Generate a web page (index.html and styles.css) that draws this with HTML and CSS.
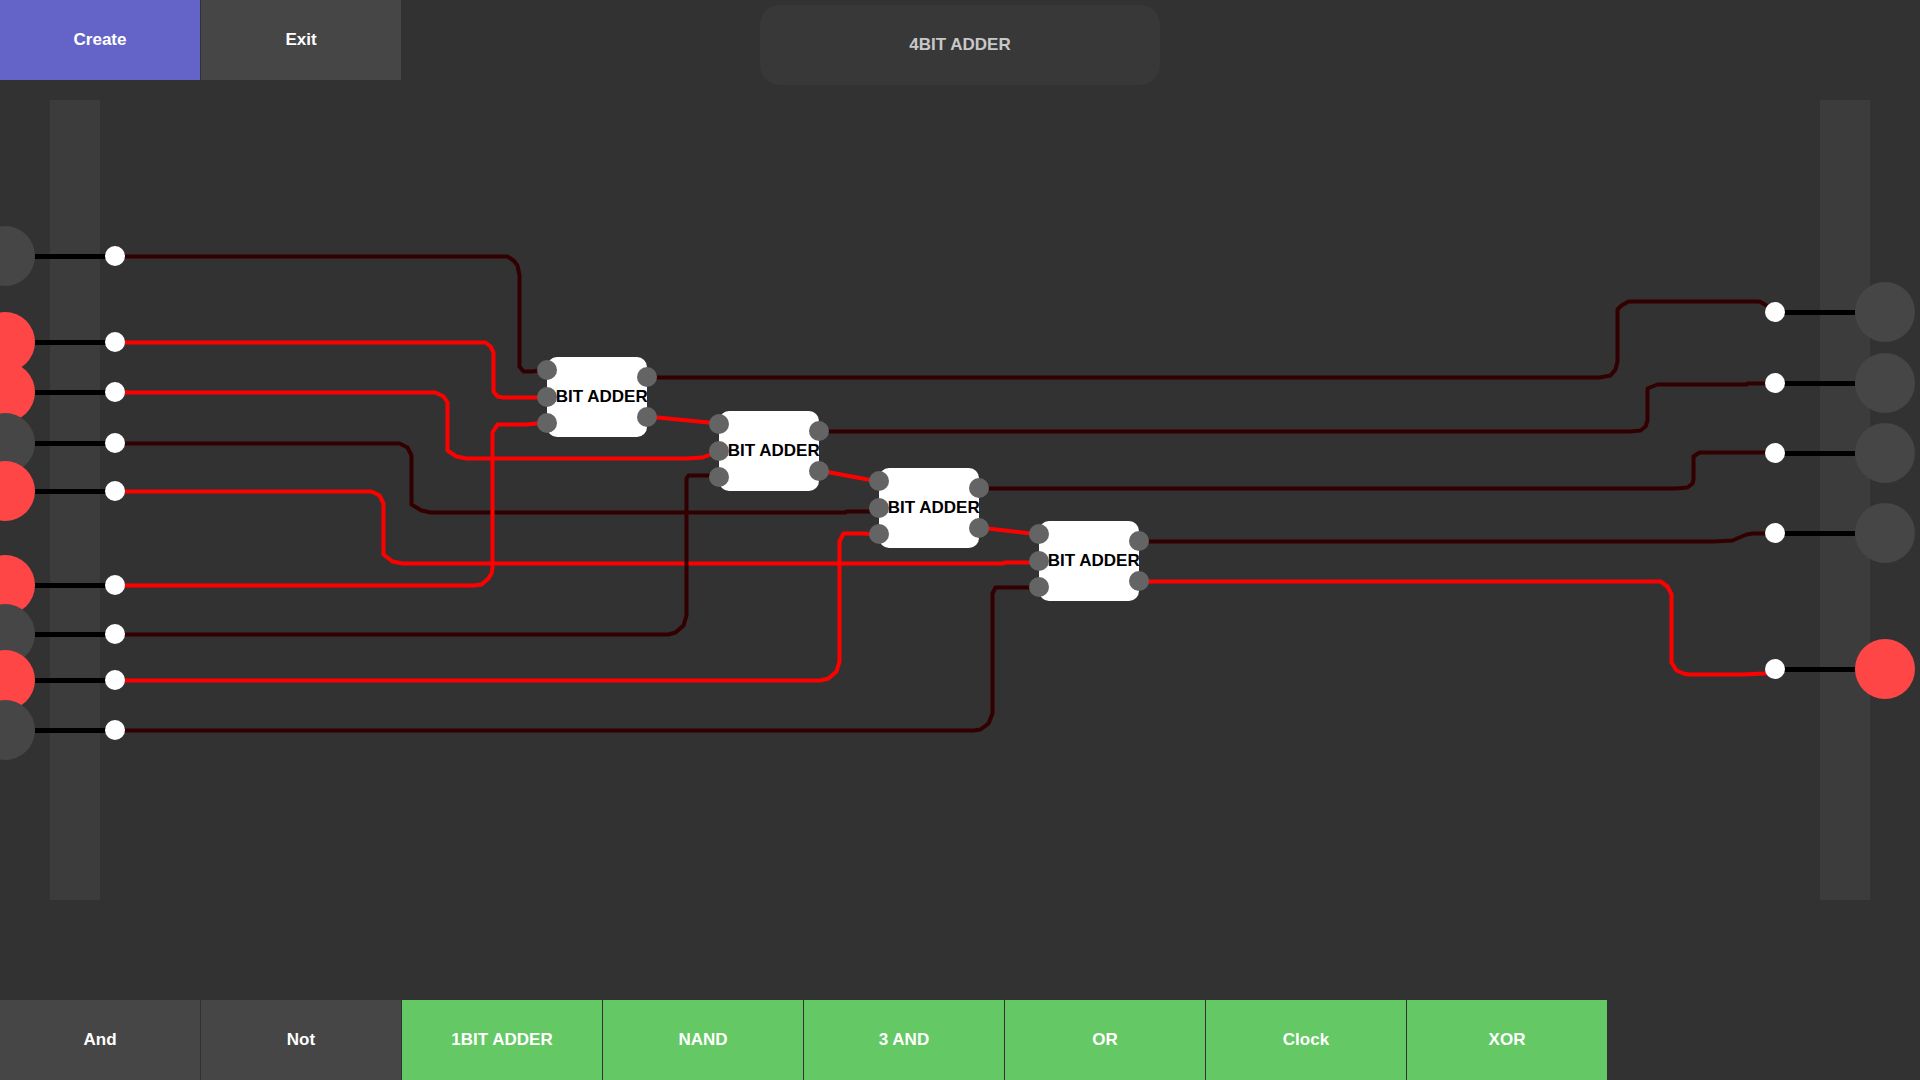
FILE: index.html
```html
<!DOCTYPE html>
<html lang="en">
<head>
<meta charset="utf-8">
<meta name="viewport" content="width=device-width, initial-scale=1">
<title>4BIT ADDER</title>
<link rel="stylesheet" href="styles.css">
</head>
<body>
<header class="topbar">
  <div class="actions">
    <button class="btn btn-create" type="button">Create</button>
    <button class="btn" type="button">Exit</button>
  </div>
  <input class="chip-name" type="text" value="4BIT ADDER" aria-label="Chip name">
</header>

<main class="board">
  <svg class="circuit" viewBox="0 85 1920 915" role="img" aria-label="Circuit board">
    <defs>
      <g id="input-lead"><path class="lead" d="M35 0H115"/></g>
      <g id="output-lead"><path class="lead" d="M1775 0H1855"/></g>
      <g id="adder">
        <rect class="chip" width="100" height="80" rx="10"/>
      </g>
      <g id="adder-pins" class="pin">
        <circle cx="0" cy="13" r="10"/>
        <circle cx="0" cy="40" r="10"/>
        <circle cx="0" cy="66" r="10"/>
        <circle cx="100" cy="20" r="10"/>
        <circle cx="100" cy="60" r="10"/>
      </g>
    </defs>

    <rect class="rail" x="50" y="100" width="50" height="800"/>
    <rect class="rail" x="1820" y="100" width="50" height="800"/>

    <g class="wires" transform="translate(.5 .5)">
      <path class="off" d="M115 256H507L513 260L517 265L519 275V366L523 371H532L546 369"/>
      <path class="on" d="M115 342H485L490 346L493 352V391L497 396L503 397H546"/>
      <path class="on" d="M115 392H435L443 396L447 402V450L456 456L466 458H686L702 457L710 454L718 450"/>
      <path class="off" d="M115 443H399L407 447L411 455V504L421 510L430 512H845L846 511H878"/>
      <path class="on" d="M115 491H371L379 495L383 503V554L392 561L402 563H1003L1004 562H1038"/>
      <path class="on" d="M115 585H473L481 584L488 578L491 573L492 567V432L497 424H526L546 422"/>
      <path class="off" d="M115 634H668L675 632L683 625L686 615V478L688 475H718"/>
      <path class="on" d="M115 680H820L828 678L836 671L839 661V541L843 533H863L878 534"/>
      <path class="off" d="M115 730H973L980 729L988 723L992 713V593L995 587H1038"/>
      <path class="on" d="M647 416L718 423M819 470L878 481M979 527L1038 534"/>
      <path class="off" d="M647 377H1599L1610 375L1615 369L1617 361V309L1621 305L1628 301H1759L1766 305L1775 312"/>
      <path class="off" d="M819 431H1629L1640 430L1645 426L1647 420V388L1657 384H1746L1747 383H1775"/>
      <path class="off" d="M979 488H1675L1687 487L1692 483L1693 479V456L1699 452H1775"/>
      <path class="off" d="M1139 541H1713L1732 540L1746 534L1752 533H1775"/>
      <path class="on" d="M1139 581H1660L1667 586L1671 594V662L1676 670L1683 673L1688 674H1742L1764 673L1775 669"/>
    </g>

    <g class="leads" transform="translate(0 .5)">
      <use href="#input-lead" y="256"/><use href="#input-lead" y="342"/><use href="#input-lead" y="392"/>
      <use href="#input-lead" y="443"/><use href="#input-lead" y="491"/><use href="#input-lead" y="585"/>
      <use href="#input-lead" y="634"/><use href="#input-lead" y="680"/><use href="#input-lead" y="730"/>
      <use href="#output-lead" y="312"/><use href="#output-lead" y="383"/><use href="#output-lead" y="453"/>
      <use href="#output-lead" y="533"/><use href="#output-lead" y="669"/>
    </g>

    <g class="switches">
      <circle class="low" cx="5" cy="256" r="30"/>
      <circle class="high" cx="5" cy="342" r="30"/>
      <circle class="high" cx="5" cy="392" r="30"/>
      <circle class="low" cx="5" cy="443" r="30"/>
      <circle class="high" cx="5" cy="491" r="30"/>
      <circle class="high" cx="5" cy="585" r="30"/>
      <circle class="low" cx="5" cy="634" r="30"/>
      <circle class="high" cx="5" cy="680" r="30"/>
      <circle class="low" cx="5" cy="730" r="30"/>
    </g>
    <g class="lamps">
      <circle class="low" cx="1885" cy="312" r="30"/>
      <circle class="low" cx="1885" cy="383" r="30"/>
      <circle class="low" cx="1885" cy="453" r="30"/>
      <circle class="low" cx="1885" cy="533" r="30"/>
      <circle class="high" cx="1885" cy="669" r="30"/>
    </g>
    <g class="terminal">
      <circle cx="115" cy="256" r="10"/><circle cx="115" cy="342" r="10"/><circle cx="115" cy="392" r="10"/>
      <circle cx="115" cy="443" r="10"/><circle cx="115" cy="491" r="10"/><circle cx="115" cy="585" r="10"/>
      <circle cx="115" cy="634" r="10"/><circle cx="115" cy="680" r="10"/><circle cx="115" cy="730" r="10"/>
      <circle cx="1775" cy="312" r="10"/><circle cx="1775" cy="383" r="10"/><circle cx="1775" cy="453" r="10"/>
      <circle cx="1775" cy="533" r="10"/><circle cx="1775" cy="669" r="10"/>
    </g>

    <g transform="translate(547 357)">
      <use href="#adder"/><text class="chip-label" x="50" y="45">1BIT ADDER</text><use href="#adder-pins"/>
    </g>
    <g transform="translate(719 411)">
      <use href="#adder"/><text class="chip-label" x="50" y="45">1BIT ADDER</text><use href="#adder-pins"/>
    </g>
    <g transform="translate(879 468)">
      <use href="#adder"/><text class="chip-label" x="50" y="45">1BIT ADDER</text><use href="#adder-pins"/>
    </g>
    <g transform="translate(1039 521)">
      <use href="#adder"/><text class="chip-label" x="50" y="45">1BIT ADDER</text><use href="#adder-pins"/>
    </g>
  </svg>
</main>

<footer class="palette">
  <button class="btn" type="button">And</button>
  <button class="btn" type="button">Not</button>
  <button class="btn btn-custom" type="button">1BIT ADDER</button>
  <button class="btn btn-custom" type="button">NAND</button>
  <button class="btn btn-custom" type="button">3 AND</button>
  <button class="btn btn-custom" type="button">OR</button>
  <button class="btn btn-custom" type="button">Clock</button>
  <button class="btn btn-custom" type="button">XOR</button>
</footer>
</body>
</html>
```
FILE: styles.css
```css
* {
  box-sizing: border-box;
}

body {
  margin: 0;
  min-height: 100vh;
  display: flex;
  flex-direction: column;
  background: #323232;
  font: bold 17px/20px "Liberation Sans", Arial, sans-serif;
}

.topbar {
  display: grid;
  grid-template-columns: 1fr 400px 1fr;
  align-items: start;
}

.actions,
.palette {
  display: flex;
  gap: 1px;
}

.btn {
  flex: 0 1 200px;
  height: 80px;
  padding: 0;
  border: 0;
  background: #464646;
  color: #fff;
  font: inherit;
  cursor: pointer;
}

.btn-create {
  background: #6464c8;
}

.btn-custom {
  background: #64c864;
}

.chip-name {
  width: 100%;
  height: 80px;
  margin-top: 5px;
  padding: 0;
  border: 0;
  border-radius: 20px;
  background: #383838;
  color: #c8c8c8;
  font: inherit;
  text-align: center;
}

.board {
  flex: 1;
  display: flex;
}

.circuit {
  display: block;
  width: 100%;
}

.rail {
  fill: #3c3c3c;
}

.wires {
  fill: none;
  stroke-width: 4;
  stroke-linejoin: round;
}

.on {
  stroke: #f00;
}

.off {
  stroke: #320000;
}

.lead {
  stroke: #000;
  stroke-width: 5;
}

.low {
  fill: #464646;
}

.high {
  fill: #ff4646;
}

.terminal,
.chip {
  fill: #fff;
}

.pin {
  fill: #646464;
}

.chip-label {
  fill: #000;
  text-anchor: middle;
}
```
